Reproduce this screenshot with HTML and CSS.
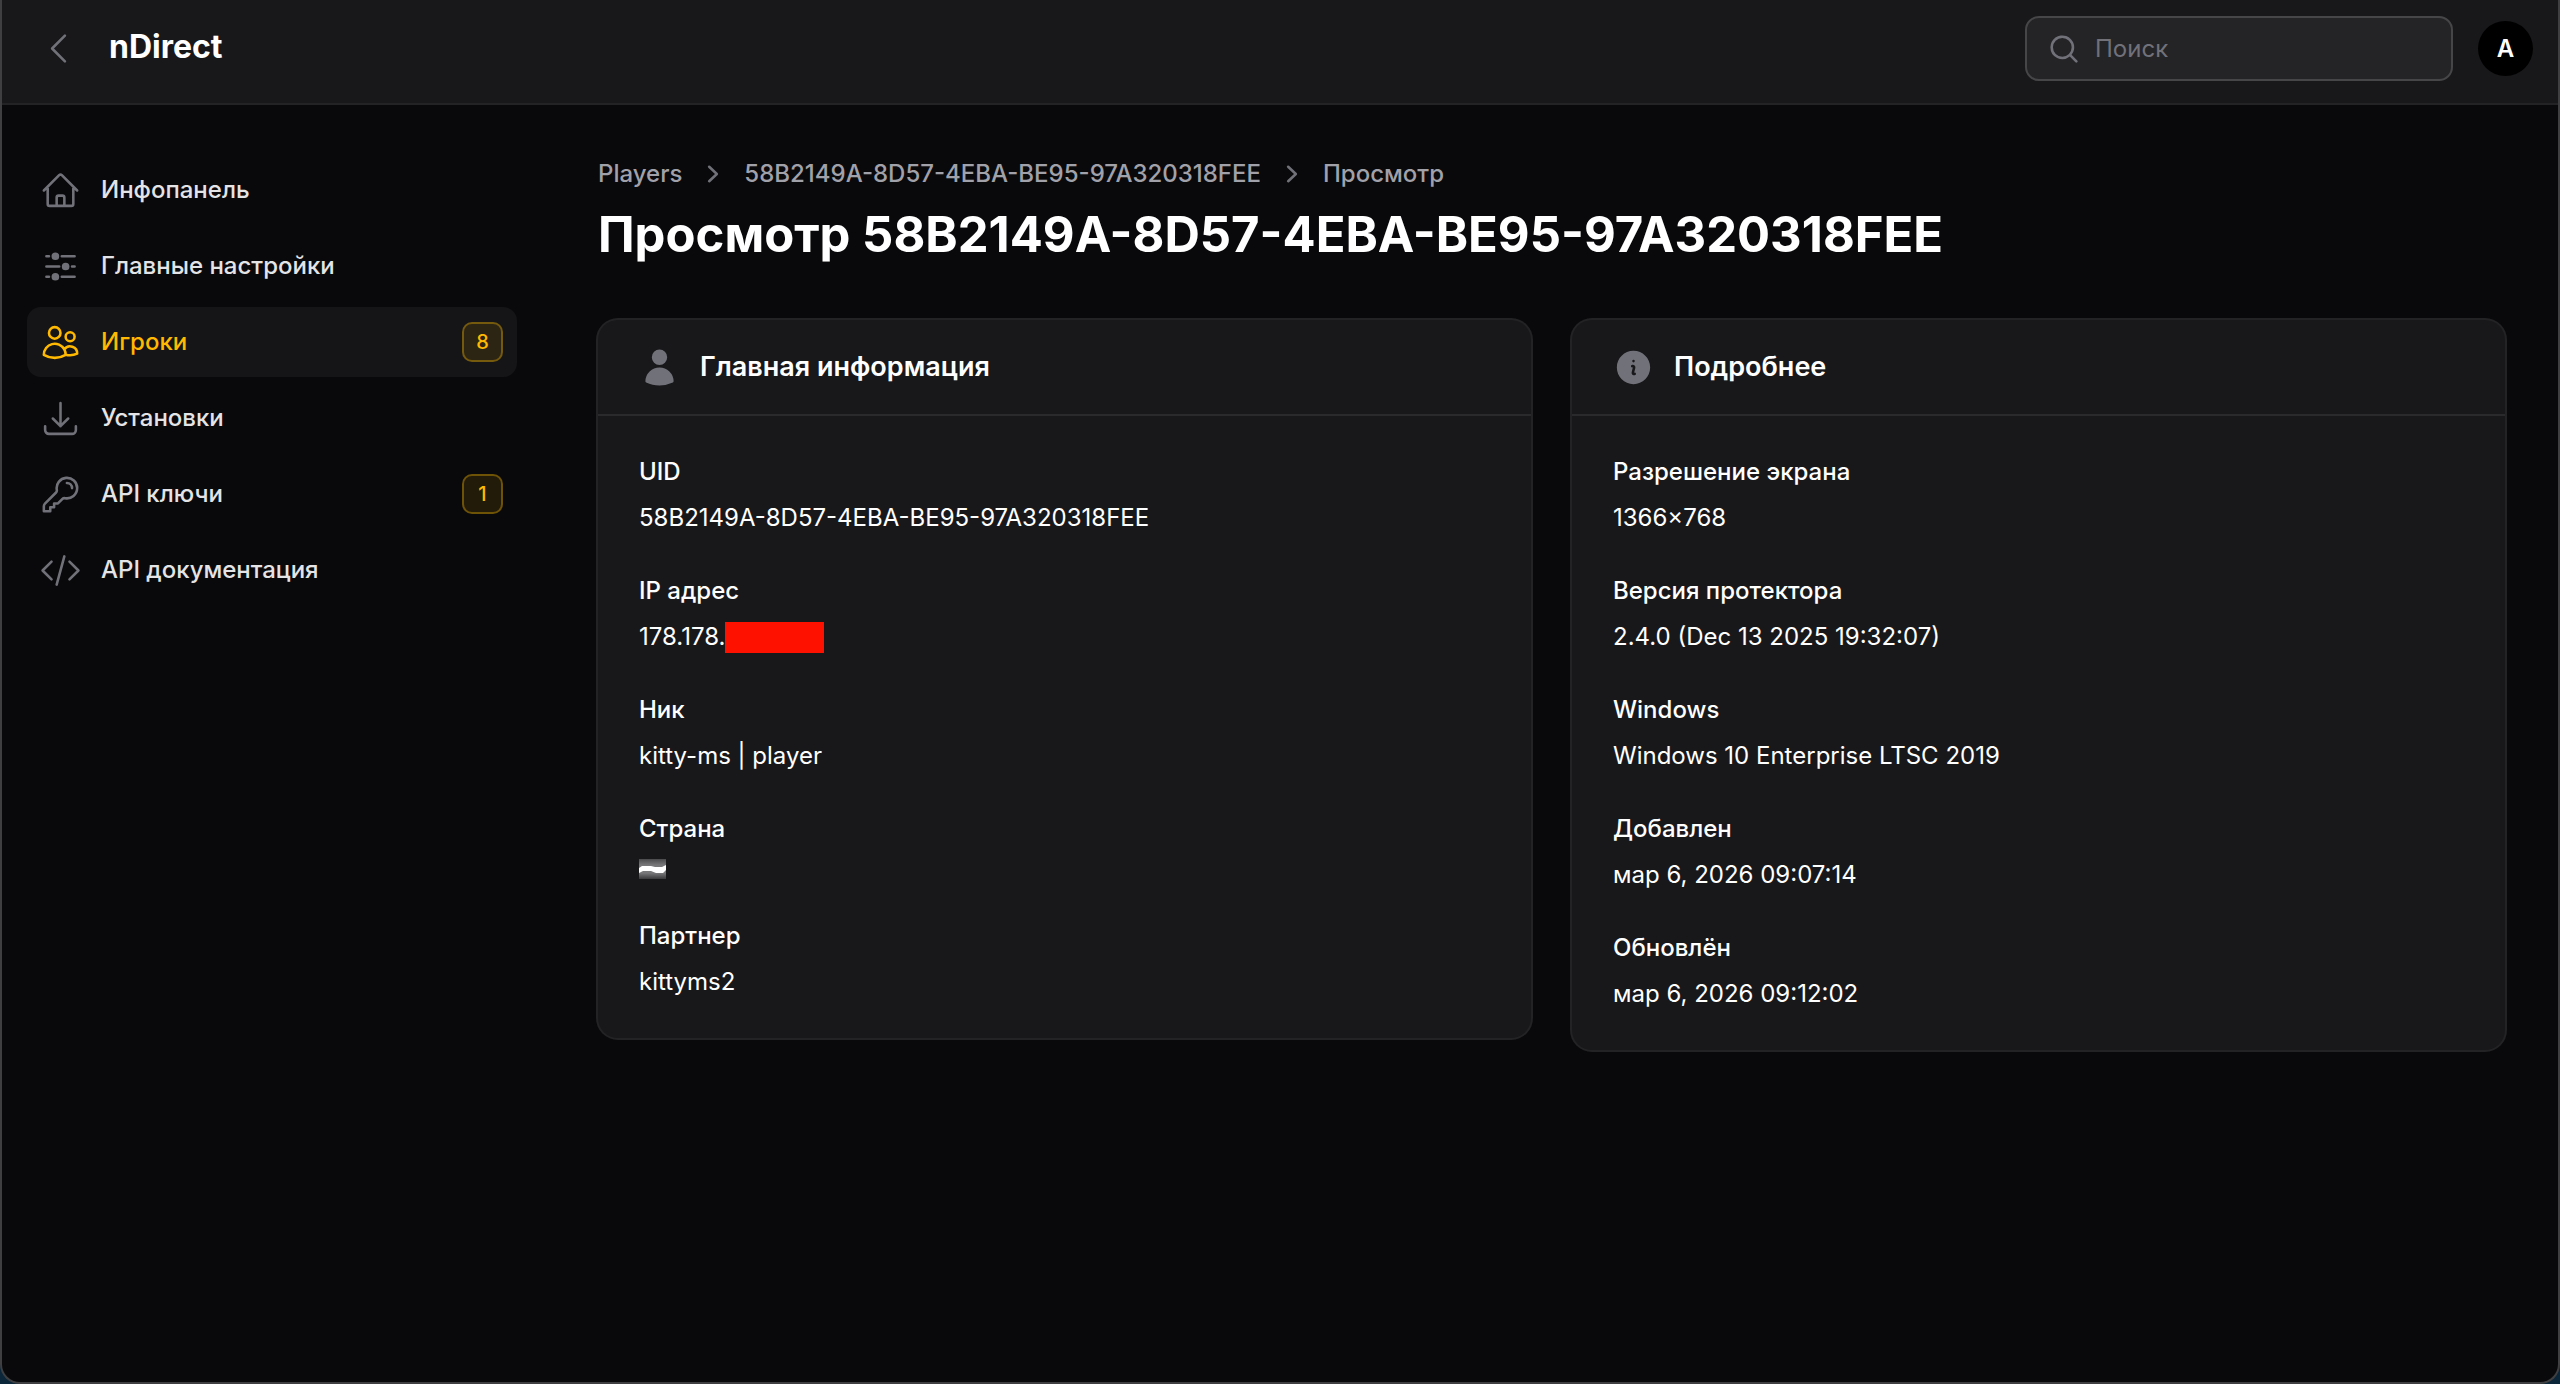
FILE: index.html
```html
<!DOCTYPE html>
<html lang="ru">
<head>
    <meta charset="UTF-8">
    <meta name="viewport" content="width=device-width, initial-scale=1.0">
    <title>Просмотр 58B2149A-8D57-4EBA-BE95-97A320318FEE - nDirect</title>
    <link rel="stylesheet" href="styles.css">
</head>
<body>
    <div class="window">
        <header class="topbar">
            <button type="button" class="collapse-btn" aria-label="Свернуть меню">
                <svg class="icon icon-outline" viewBox="0 0 24 24"><path d="M15.75 19.5 8.25 12l7.5-7.5"/></svg>
            </button>
            <a href="#" class="brand">nDirect</a>
            <div class="topbar-end">
                <label class="search" for="search">
                    <svg class="icon-mini" viewBox="0 0 20 20" role="img" aria-label="Поиск"><path fill-rule="evenodd" d="M9 3.5a5.5 5.5 0 1 0 0 11 5.5 5.5 0 0 0 0-11ZM2 9a7 7 0 1 1 12.452 4.391l3.328 3.329a.75.75 0 1 1-1.06 1.06l-3.329-3.328A7 7 0 0 1 2 9Z"/></svg>
                    <input type="search" id="search" placeholder="Поиск">
                </label>
                <button type="button" class="avatar">A</button>
            </div>
        </header>

        <div class="layout">
            <nav class="sidebar">
                <a href="#" class="nav-item">
                    <svg class="icon icon-outline" viewBox="0 0 24 24"><path d="m2.25 12 8.954-8.955c.44-.439 1.152-.439 1.591 0L21.75 12M4.5 9.75v10.125c0 .621.504 1.125 1.125 1.125H9.75v-4.875c0-.621.504-1.125 1.125-1.125h2.25c.621 0 1.125.504 1.125 1.125V21h4.125c.621 0 1.125-.504 1.125-1.125V9.75M8.25 21h8.25"/></svg>
                    <span class="nav-label">Инфопанель</span>
                </a>
                <a href="#" class="nav-item">
                    <svg class="icon icon-solid" viewBox="0 0 24 24"><path d="M18.75 12.75h1.5a.75.75 0 0 0 0-1.5h-1.5a.75.75 0 0 0 0 1.5ZM12 6a.75.75 0 0 1 .75-.75h7.5a.75.75 0 0 1 0 1.5h-7.5A.75.75 0 0 1 12 6ZM12 18a.75.75 0 0 1 .75-.75h7.5a.75.75 0 0 1 0 1.5h-7.5A.75.75 0 0 1 12 18ZM3.75 6.75h1.5a.75.75 0 1 0 0-1.5h-1.5a.75.75 0 0 0 0 1.5ZM5.25 18.75h-1.5a.75.75 0 0 1 0-1.5h1.5a.75.75 0 0 1 0 1.5ZM3 12a.75.75 0 0 1 .75-.75h7.5a.75.75 0 0 1 0 1.5h-7.5A.75.75 0 0 1 3 12ZM9 3.75a2.25 2.25 0 1 0 0 4.5 2.25 2.25 0 0 0 0-4.5ZM12.75 12a2.25 2.25 0 1 1 4.5 0 2.25 2.25 0 0 1-4.5 0ZM9 15.75a2.25 2.25 0 1 0 0 4.5 2.25 2.25 0 0 0 0-4.5Z"/></svg>
                    <span class="nav-label">Главные настройки</span>
                </a>
                <a href="#" class="nav-item active" aria-current="page">
                    <svg class="icon icon-outline" viewBox="0 0 24 24"><path d="M15 19.128a9.38 9.38 0 0 0 2.625.372 9.337 9.337 0 0 0 4.121-.952 4.125 4.125 0 0 0-7.533-2.493M15 19.128v-.003c0-1.113-.285-2.16-.786-3.07M15 19.128v.106A12.318 12.318 0 0 1 8.624 21c-2.331 0-4.512-.645-6.374-1.766l-.001-.109a6.375 6.375 0 0 1 11.964-3.07M12 6.375a3.375 3.375 0 1 1-6.75 0 3.375 3.375 0 0 1 6.75 0Zm8.25 2.25a2.625 2.625 0 1 1-5.25 0 2.625 2.625 0 0 1 5.25 0Z"/></svg>
                    <span class="nav-label">Игроки</span>
                    <span class="badge">8</span>
                </a>
                <a href="#" class="nav-item">
                    <svg class="icon icon-outline" viewBox="0 0 24 24"><path d="M3 16.5v2.25A2.25 2.25 0 0 0 5.25 21h13.5A2.25 2.25 0 0 0 21 18.75V16.5M16.5 12 12 16.5m0 0L7.5 12m4.5 4.5V3"/></svg>
                    <span class="nav-label">Установки</span>
                </a>
                <a href="#" class="nav-item">
                    <svg class="icon icon-outline" viewBox="0 0 24 24"><path d="M15.75 5.25a3 3 0 0 1 3 3m3 0a6 6 0 0 1-7.029 5.912c-.563-.097-1.159.026-1.563.43L10.5 17.25H8.25v2.25H6v2.25H2.25v-2.818c0-.597.237-1.17.659-1.591l6.499-6.499c.404-.404.527-1 .43-1.563A6 6 0 1 1 21.75 8.25Z"/></svg>
                    <span class="nav-label">API ключи</span>
                    <span class="badge">1</span>
                </a>
                <a href="#" class="nav-item">
                    <svg class="icon icon-outline" viewBox="0 0 24 24"><path d="M17.25 6.75 22.5 12l-5.25 5.25m-10.5 0L1.5 12l5.25-5.25m7.5-3-4.5 16.5"/></svg>
                    <span class="nav-label">API документация</span>
                </a>
            </nav>

            <main class="content">
                <nav class="breadcrumbs">
                    <a href="#">Players</a>
                    <svg class="icon-mini" viewBox="0 0 20 20"><path d="M7.21 14.77a.75.75 0 0 1 .02-1.06L11.168 10 7.23 6.29a.75.75 0 1 1 1.04-1.08l4.5 4.25a.75.75 0 0 1 0 1.08l-4.5 4.25a.75.75 0 0 1-1.06-.02Z"/></svg>
                    <a href="#">58B2149A-8D57-4EBA-BE95-97A320318FEE</a>
                    <svg class="icon-mini" viewBox="0 0 20 20"><path d="M7.21 14.77a.75.75 0 0 1 .02-1.06L11.168 10 7.23 6.29a.75.75 0 1 1 1.04-1.08l4.5 4.25a.75.75 0 0 1 0 1.08l-4.5 4.25a.75.75 0 0 1-1.06-.02Z"/></svg>
                    <span>Просмотр</span>
                </nav>
                <h1 class="page-title">Просмотр 58B2149A-8D57-4EBA-BE95-97A320318FEE</h1>

                <div class="cards">
                    <section class="card">
                        <div class="card-header">
                            <svg class="icon icon-solid" viewBox="0 0 24 24"><path d="M7.5 6a4.5 4.5 0 1 1 9 0 4.5 4.5 0 0 1-9 0ZM3.751 20.105a8.25 8.25 0 0 1 16.498 0 .75.75 0 0 1-.437.695A18.683 18.683 0 0 1 12 22.5c-2.786 0-5.433-.608-7.812-1.7a.75.75 0 0 1-.437-.695Z"/></svg>
                            <h2>Главная информация</h2>
                        </div>
                        <dl class="card-body">
                            <div class="entry">
                                <dt>UID</dt>
                                <dd>58B2149A-8D57-4EBA-BE95-97A320318FEE</dd>
                            </div>
                            <div class="entry">
                                <dt>IP адрес</dt>
                                <dd class="ip">178.178.<span class="redacted"></span></dd>
                            </div>
                            <div class="entry">
                                <dt>Ник</dt>
                                <dd>kitty-ms | player</dd>
                            </div>
                            <div class="entry">
                                <dt>Страна</dt>
                                <dd class="flag">
                                    <svg viewBox="0 0 27 20">
                                        <defs>
                                            <linearGradient id="flag-shade" x1="0" y1="0" x2="0" y2="1">
                                                <stop offset="0" stop-color="#4a4a4c"/>
                                                <stop offset="0.3" stop-color="#77777a"/>
                                                <stop offset="0.7" stop-color="#78787a"/>
                                                <stop offset="1" stop-color="#3a3a3c"/>
                                            </linearGradient>
                                        </defs>
                                        <path fill="url(#flag-shade)" d="M0 0H27V20H0Z"/>
                                        <path fill="#fff" d="M0 9 3 7H12L16 8H23L27 6V11L24 14H17L12 12H4L0 14Z"/>
                                    </svg>
                                </dd>
                            </div>
                            <div class="entry">
                                <dt>Партнер</dt>
                                <dd>kittyms2</dd>
                            </div>
                        </dl>
                    </section>

                    <section class="card">
                        <div class="card-header">
                            <svg class="icon icon-solid" viewBox="0 0 24 24"><path fill-rule="evenodd" d="M2.25 12c0-5.385 4.365-9.75 9.75-9.75s9.75 4.365 9.75 9.75-4.365 9.75-9.75 9.75S2.25 17.385 2.25 12Zm8.706-1.442c1.146-.573 2.437.463 2.126 1.706l-.709 2.836.042-.02a.75.75 0 0 1 .67 1.34l-.04.022c-1.147.573-2.438-.463-2.127-1.706l.71-2.836-.042.02a.75.75 0 1 1-.671-1.34l.041-.022ZM12 9a.75.75 0 1 0 0-1.5.75.75 0 0 0 0 1.5Z"/></svg>
                            <h2>Подробнее</h2>
                        </div>
                        <dl class="card-body">
                            <div class="entry">
                                <dt>Разрешение экрана</dt>
                                <dd>1366×768</dd>
                            </div>
                            <div class="entry">
                                <dt>Версия протектора</dt>
                                <dd>2.4.0 (Dec 13 2025 19:32:07)</dd>
                            </div>
                            <div class="entry">
                                <dt>Windows</dt>
                                <dd>Windows 10 Enterprise LTSC 2019</dd>
                            </div>
                            <div class="entry">
                                <dt>Добавлен</dt>
                                <dd>мар 6, 2026 09:07:14</dd>
                            </div>
                            <div class="entry">
                                <dt>Обновлён</dt>
                                <dd>мар 6, 2026 09:12:02</dd>
                            </div>
                        </dl>
                    </section>
                </div>
            </main>
        </div>
    </div>
</body>
</html>
```
FILE: styles.css
```css
* {
    box-sizing: border-box;
}
html {
    background-color: #0b2638;
}
body {
    margin: 0;
    font-family: Inter, 'Noto Sans', sans-serif;
    font-size: 24px;
    line-height: 40px;
    color: #fff;
}
a {
    color: inherit;
    text-decoration: none;
}
button {
    border: none;
    padding: 0;
    background: none;
    font: inherit;
    color: inherit;
    cursor: pointer;
}
.window {
    display: flex;
    flex-direction: column;
    min-height: 100vh;
    background-color: #09090b;
    border: 2px solid #3f3f42;
    border-top: none;
    border-radius: 0 0 20px 20px;
    overflow: hidden;
}

/* Icons */
.icon {
    display: block;
    flex: none;
    width: 41px;
    height: 41px;
    color: #71717a;
}
.icon-outline {
    fill: none;
    stroke: currentColor;
    stroke-width: 1.5;
    stroke-linecap: round;
    stroke-linejoin: round;
}
.icon-solid {
    fill: currentColor;
}
.icon-mini {
    display: block;
    flex: none;
    width: 34px;
    height: 34px;
    fill: #71717a;
}

/* Top bar */
.topbar {
    display: flex;
    align-items: center;
    padding: 16px 25px 22px 36px;
    background-color: #18181b;
    border-bottom: 2px solid #232326;
}
.brand {
    margin-left: 30px;
    padding-bottom: 3px;
    font-size: 32px;
    font-weight: 700;
}
.topbar-end {
    display: flex;
    align-items: center;
    gap: 25px;
    margin-left: auto;
}
.search {
    display: flex;
    align-items: center;
    gap: 14px;
    width: 428px;
    height: 65px;
    padding: 0 20px;
    background-color: #242427;
    border: 2px solid #464649;
    border-radius: 14px;
}
.search input {
    flex: 1;
    min-width: 0;
    padding: 0;
    border: none;
    outline: none;
    background: none;
    font: inherit;
    color: #fff;
}
.search input::placeholder {
    color: #71717a;
    opacity: 1;
}
.avatar {
    width: 55px;
    height: 55px;
    border-radius: 50%;
    background-color: #000;
    font-weight: 600;
}

/* Sidebar */
.layout {
    display: flex;
    flex: 1;
}
.sidebar {
    display: flex;
    flex-direction: column;
    flex: none;
    gap: 6px;
    width: 542px;
    padding: 50px 27px 50px 25px;
}
.nav-item {
    display: flex;
    align-items: center;
    gap: 20px;
    height: 70px;
    padding: 0 14px 0 13px;
    border-radius: 14px;
    font-weight: 500;
    color: #e4e4e7;
}
.nav-label {
    flex: 1;
}
.nav-item.active {
    background-color: #151517;
    color: #ffb900;
}
.nav-item.active .icon {
    color: #ffb900;
}
.badge {
    min-width: 41px;
    padding: 0 10px;
    border: 2px solid rgba(255, 185, 0, 0.35);
    border-radius: 10px;
    background-color: rgba(255, 185, 0, 0.1);
    font-size: 20px;
    line-height: 36px;
    text-align: center;
    color: #ffb900;
}

/* Content */
.content {
    flex: 1;
    min-width: 0;
    padding: 52px 53px 52px 54px;
}
.breadcrumbs {
    display: flex;
    align-items: center;
    gap: 14px;
    line-height: 34px;
    font-weight: 500;
    color: #a1a1aa;
}
.page-title {
    margin: 13px 0 55px;
    font-size: 49px;
    line-height: 61px;
    font-weight: 700;
}
.cards {
    display: grid;
    grid-template-columns: 1fr 1fr;
    align-items: start;
    gap: 41px;
}
.card {
    background-color: #18181b;
    box-shadow: 0 0 0 2px #232326;
    border-radius: 20px;
}
.card-header {
    display: flex;
    align-items: center;
    gap: 20px;
    padding: 26px 41px;
    border-bottom: 2px solid #2a2a2d;
}
.card-header h2 {
    margin: 0;
    font-size: 27px;
    line-height: 42px;
    font-weight: 600;
}
.card-body {
    display: flex;
    flex-direction: column;
    gap: 33px;
    margin: 0;
    padding: 36px 41px;
}
.entry {
    display: flex;
    flex-direction: column;
    gap: 6px;
}
.entry dt {
    font-weight: 500;
}
.entry dd {
    margin: 0;
}
.entry .ip {
    display: flex;
    align-items: center;
}
.redacted {
    width: 99px;
    height: 31px;
    background-color: #ff1100;
}
.entry .flag {
    display: flex;
    align-items: center;
    height: 28px;
}
.flag svg {
    width: 27px;
    height: 20px;
}
```
